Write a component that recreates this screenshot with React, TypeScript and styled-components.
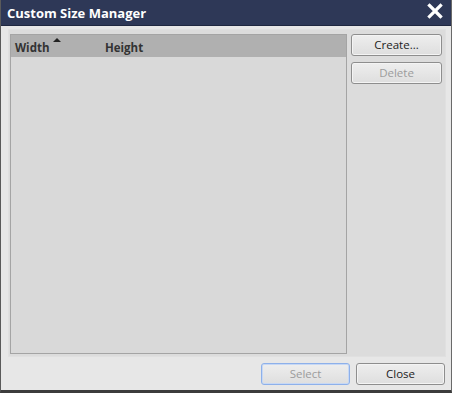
import React from 'react'
import styled, { createGlobalStyle } from 'styled-components'

const Global = createGlobalStyle`
    html, body {
        margin: 0;
        padding: 0;
        background: #3a3a3a;
    }
    * {
        box-sizing: border-box;
    }
`

const Window = styled.div`
    width: 452px;
    height: 393px;
    display: flex;
    flex-direction: column;
    background: #e7e7e7;
    border-left: 1px solid #5a5a5a;
    border-right: 1px solid #6a6a6a;
    border-bottom: 3px solid #3c3c3c;
    font-family: "Open Sans", "Noto Sans", sans-serif;
`

const TitleBar = styled.div`
    height: 26px;
    flex: none;
    display: flex;
    align-items: center;
    justify-content: space-between;
    padding: 0 8px 0 6px;
    background: #2e3857;
    border-bottom: 1px solid #1f2740;
`

const Title = styled.h1`
    margin: 0;
    font-size: 13px;
    font-weight: 700;
    color: #ffffff;
`

const CloseX = styled.svg`
    width: 16px;
    height: 16px;
    margin-top: -3px;
`

const Body = styled.div`
    flex: 1;
    display: flex;
    flex-direction: column;
    padding: 3px 5px 5px 7px;
`

const Panel = styled.div`
    flex: 1;
    display: flex;
    gap: 4px;
    padding: 4px 3px 2px 1px;
    background: #dcdcdc;
    border: 1px solid #e0e0e0;
`

const List = styled.div`
    flex: 1;
    display: flex;
    flex-direction: column;
    background: #d9d9d9;
    border: 1px solid #a4a4a4;
`

const Header = styled.div`
    height: 22px;
    display: flex;
    align-items: center;
    background: #b0b0b0;
`

const Column = styled.div<{ $w: number }>`
    position: relative;
    width: ${p => p.$w}px;
    padding-left: 4px;
    padding-top: 2px;
    font-size: 11.5px;
    font-weight: 700;
    color: #333333;
`

const SortArrow = styled.span`
    position: absolute;
    left: 42px;
    top: 0;
    width: 0;
    height: 0;
    border-left: 4px solid transparent;
    border-right: 4px solid transparent;
    border-bottom: 4px solid #222222;
`

const Side = styled.div`
    width: 91px;
    display: flex;
    flex-direction: column;
    gap: 6px;
`

const Button = styled.button<{ $focus?: boolean }>`
    height: 22px;
    width: 100%;
    padding: 0 0 1px;
    font-family: "Open Sans", "Noto Sans", sans-serif;
    font-size: 11.5px;
    color: ${p => (p.disabled ? '#9c9c9c' : '#222222')};
    background: linear-gradient(#eeeeee, #dedede);
    border: 1px solid ${p => (p.$focus ? '#8db0ea' : '#8e8e8e')};
    border-radius: 3px;
    box-shadow: inset 0 0 0 1px ${p => (p.$focus ? '#c7d8f4' : '#f4f4f4')};
`

const Footer = styled.div`
    height: 28px;
    flex: none;
    display: flex;
    justify-content: flex-end;
    align-items: flex-end;
    gap: 6px;
    padding-right: 1px;
`

const FooterButton = styled.div`
    width: 89px;
`

const App = () => {
    return (
        <>
            <Global />
            <Window>
                <TitleBar>
                    <Title>Custom Size Manager</Title>
                    <CloseX viewBox="0 0 16 16">
                        <path d="M2.5 2.5 L13.5 13.5 M13.5 2.5 L2.5 13.5" stroke="#ffffff" strokeWidth="3.2" strokeLinecap="square" />
                    </CloseX>
                </TitleBar>
                <Body>
                    <Panel>
                        <List>
                            <Header>
                                <Column $w={90}>
                                    Width
                                    <SortArrow />
                                </Column>
                                <Column $w={120}>Height</Column>
                            </Header>
                        </List>
                        <Side>
                            <Button>Create...</Button>
                            <Button disabled>Delete</Button>
                        </Side>
                    </Panel>
                    <Footer>
                        <FooterButton>
                            <Button disabled $focus>Select</Button>
                        </FooterButton>
                        <FooterButton>
                            <Button>Close</Button>
                        </FooterButton>
                    </Footer>
                </Body>
            </Window>
        </>
    )
}

export default App
